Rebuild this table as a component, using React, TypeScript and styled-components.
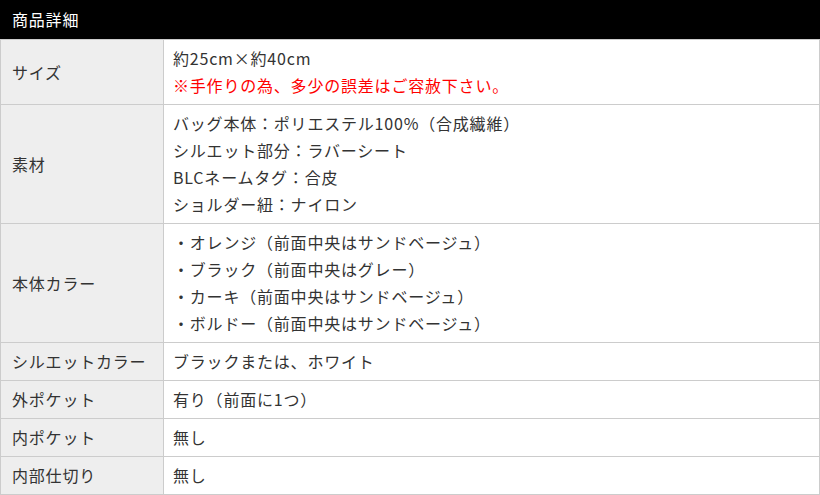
import React from 'react';
import styled, { createGlobalStyle } from 'styled-components';

const GlobalStyle = createGlobalStyle`
  body {
    margin: 0;
    background: #fff;
    font-family: 'Noto Sans CJK JP', 'Noto Sans', sans-serif;
  }
`;

type Row = {
  label: string;
  lines: string[];
  note?: string;
};

const rows: Row[] = [
  {
    label: 'サイズ',
    lines: ['約25cm×約40cm'],
    note: '※手作りの為、多少の誤差はご容赦下さい。',
  },
  {
    label: '素材',
    lines: [
      'バッグ本体：ポリエステル100%（合成繊維）',
      'シルエット部分：ラバーシート',
      'BLCネームタグ：合皮',
      'ショルダー紐：ナイロン',
    ],
  },
  {
    label: '本体カラー',
    lines: [
      '・オレンジ（前面中央はサンドベージュ）',
      '・ブラック（前面中央はグレー）',
      '・カーキ（前面中央はサンドベージュ）',
      '・ボルドー（前面中央はサンドベージュ）',
    ],
  },
  { label: 'シルエットカラー', lines: ['ブラックまたは、ホワイト'] },
  { label: '外ポケット', lines: ['有り（前面に1つ）'] },
  { label: '内ポケット', lines: ['無し'] },
  { label: '内部仕切り', lines: ['無し'] },
];

export default function App() {
  return (
    <Wrapper>
      <GlobalStyle />
      <Heading>商品詳細</Heading>
      <Table>
        <tbody>
          {rows.map((row) => (
            <tr key={row.label}>
              <Label>{row.label}</Label>
              <Value>
                {row.lines.map((line) => (
                  <Line key={line}>{line}</Line>
                ))}
                {row.note && <Note>{row.note}</Note>}
              </Value>
            </tr>
          ))}
        </tbody>
      </Table>
    </Wrapper>
  );
}

const Wrapper = styled.div`
  width: 820px;
  color: #333;
  font-size: 16px;
  letter-spacing: 0.8px;
`;

const Heading = styled.h2`
  margin: 0;
  height: 39px;
  padding: 0 12px;
  background: #000;
  color: #fff;
  font-size: 16px;
  font-weight: normal;
  line-height: 39px;
`;

const Table = styled.table`
  width: 100%;
  border-collapse: collapse;
`;

const Label = styled.th`
  width: 151px;
  padding: 5px 0 5px 11px;
  background: #eee;
  border: 1px solid #ccc;
  font-weight: normal;
  text-align: left;
  vertical-align: middle;
  line-height: 27px;
  white-space: nowrap;
`;

const Value = styled.td`
  padding: 5px 9px;
  border: 1px solid #ccc;
  line-height: 27px;
`;

const Line = styled.div``;

const Note = styled.div`
  color: #ff0000;
`;
